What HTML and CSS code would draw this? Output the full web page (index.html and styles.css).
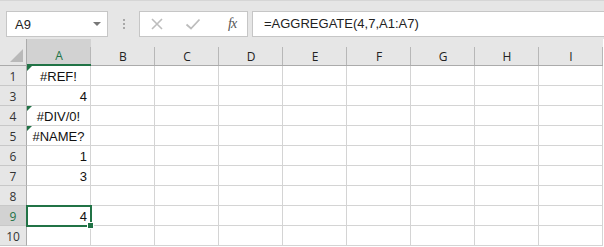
FILE: index.html
```html
<!DOCTYPE html>
<html lang="en">
<head>
    <meta charset="UTF-8">
    <title>AGGREGATE</title>
    <link rel="stylesheet" href="styles.css">
</head>
<body>
    <div class="toolbar">
        <div class="name-box">
            <span>A9</span>
            <span class="arrow"></span>
        </div>
        <div class="dots"><i></i><i></i><i></i></div>
        <div class="buttons">
            <svg class="btn" width="14" height="14" viewBox="0 0 14 14"><path d="M2 2 L12 12 M12 2 L2 12" stroke="#bdbdbd" stroke-width="1.6" fill="none"/></svg>
            <svg class="btn" width="16" height="14" viewBox="0 0 16 14"><path d="M1.5 7.5 L6 11.5 L14.5 2.5" stroke="#bdbdbd" stroke-width="1.8" fill="none"/></svg>
            <span class="fx">fx</span>
        </div>
        <div class="formula">=AGGREGATE(4,7,A1:A7)</div>
    </div>
    <div class="sheet">
        <div class="corner"><span class="tri"></span></div>
        <div class="col-head sel">A</div>
        <div class="col-head">B</div>
        <div class="col-head">C</div>
        <div class="col-head">D</div>
        <div class="col-head">E</div>
        <div class="col-head">F</div>
        <div class="col-head">G</div>
        <div class="col-head">H</div>
        <div class="col-head">I</div>
    </div>
    <div class="sheet" id="rows"></div>
    <script>
        const rows = [
            ["1", "#REF!", "err"],
            ["3", "4", "num"],
            ["4", "#DIV/0!", "err"],
            ["5", "#NAME?", "err"],
            ["6", "1", "num"],
            ["7", "3", "num"],
            ["8", "", ""],
            ["9", "4", "num active"],
            ["10", "", ""]
        ];
        const grid = document.getElementById("rows");
        grid.innerHTML = rows.map(r => {
            let html = `<div class="row-head${r[0] === "9" ? " sel" : ""}">${r[0]}</div>`;
            html += `<div class="cell ${r[2]}">${r[1]}${r[2] === "num active" ? '<span class="handle"></span>' : ""}</div>`;
            for (let i = 0; i < 8; i++) html += `<div class="cell"></div>`;
            return html;
        }).join("");
    </script>
</body>
</html>
```

FILE: styles.css
```css
body {
    margin: 0;
    width: 604px;
    height: 247px;
    overflow: hidden;
    background: #fff;
    font-family: "Liberation Sans", Arial, sans-serif;
}
.toolbar {
    height: 39px;
    background: #e6e6e6;
    border-top: 1px solid #d6d6d6;
    box-sizing: border-box;
    display: flex;
    align-items: flex-start;
    padding-top: 10px;
    padding-left: 6px;
}
.name-box {
    width: 102px;
    height: 26px;
    box-sizing: border-box;
    background: #fff;
    border: 1px solid #c6c6c6;
    display: flex;
    align-items: center;
    justify-content: space-between;
    padding: 0 6px 0 8px;
    font-size: 13px;
    color: #222;
}
.arrow {
    border-left: 4px solid transparent;
    border-right: 4px solid transparent;
    border-top: 4px solid #777;
}
.dots {
    width: 31px;
    height: 26px;
    display: flex;
    flex-direction: column;
    align-items: center;
    justify-content: center;
    gap: 2px;
}
.dots i {
    width: 2px;
    height: 2px;
    background: #a8a8a8;
}
.buttons {
    width: 109px;
    height: 26px;
    box-sizing: border-box;
    background: #fff;
    border: 1px solid #c6c6c6;
    display: flex;
    align-items: center;
    padding-left: 10px;
    gap: 21px;
}
.fx {
    font-family: "Liberation Serif", serif;
    font-style: italic;
    font-size: 14px;
    color: #555;
    margin-left: 6px;
    letter-spacing: -1px;
}
.formula {
    flex: 1;
    height: 26px;
    box-sizing: border-box;
    margin-left: 4px;
    background: #fff;
    border: 1px solid #c6c6c6;
    border-right: none;
    font-size: 13px;
    color: #222;
    padding-left: 11px;
    line-height: 24px;
}
.sheet {
    display: grid;
    grid-template-columns: 27px repeat(9, 64px);
}
.corner {
    height: 27px;
    background: #e6e6e6;
    border-bottom: 1px solid #ababab;
    border-right: 1px solid #ababab;
    box-sizing: border-box;
    position: relative;
}
.tri {
    position: absolute;
    right: 3px;
    bottom: 3px;
    border-left: 13px solid transparent;
    border-bottom: 13px solid #b9b9b9;
}
.col-head {
    height: 27px;
    background: #e6e6e6;
    border-bottom: 1px solid #ababab;
    box-sizing: border-box;
    font-family: "Open Sans", sans-serif;
    font-size: 12px;
    color: #222;
    text-align: center;
    line-height: 35px;
    position: relative;
}
.col-head::after {
    content: "";
    position: absolute;
    right: 0;
    top: 8px;
    bottom: 0;
    width: 1px;
    background: #b7b7b7;
}
.col-head.sel {
    background: #d2d2d2;
    border-bottom: 2px solid #217346;
    color: #217346;
    line-height: 34px;
}
.row-head {
    height: 20px;
    box-sizing: border-box;
    background: #e6e6e6;
    border-bottom: 1px solid #c8c8c8;
    border-right: 1px solid #ababab;
    font-family: "Open Sans", sans-serif;
    font-size: 12px;
    color: #333;
    text-align: center;
    line-height: 21px;
}
.row-head.sel {
    background: #d2d2d2;
    color: #217346;
}
.cell {
    height: 20px;
    box-sizing: border-box;
    border-right: 1px solid #d4d4d4;
    border-bottom: 1px solid #d4d4d4;
    font-size: 13px;
    color: #111;
    line-height: 22px;
    padding: 0 3px;
    position: relative;
}
.cell.num {
    text-align: right;
}
.cell.err {
    text-align: center;
}
.cell.err::before {
    content: "";
    position: absolute;
    left: 0;
    top: 0;
    border-top: 5px solid #217346;
    border-right: 5px solid transparent;
}
.cell.active {
    outline: 2px solid #217346;
    outline-offset: -1px;
    z-index: 1;
}
.handle {
    position: absolute;
    right: -4px;
    bottom: -4px;
    width: 5px;
    height: 5px;
    background: #217346;
    border: 1px solid #fff;
}
```
